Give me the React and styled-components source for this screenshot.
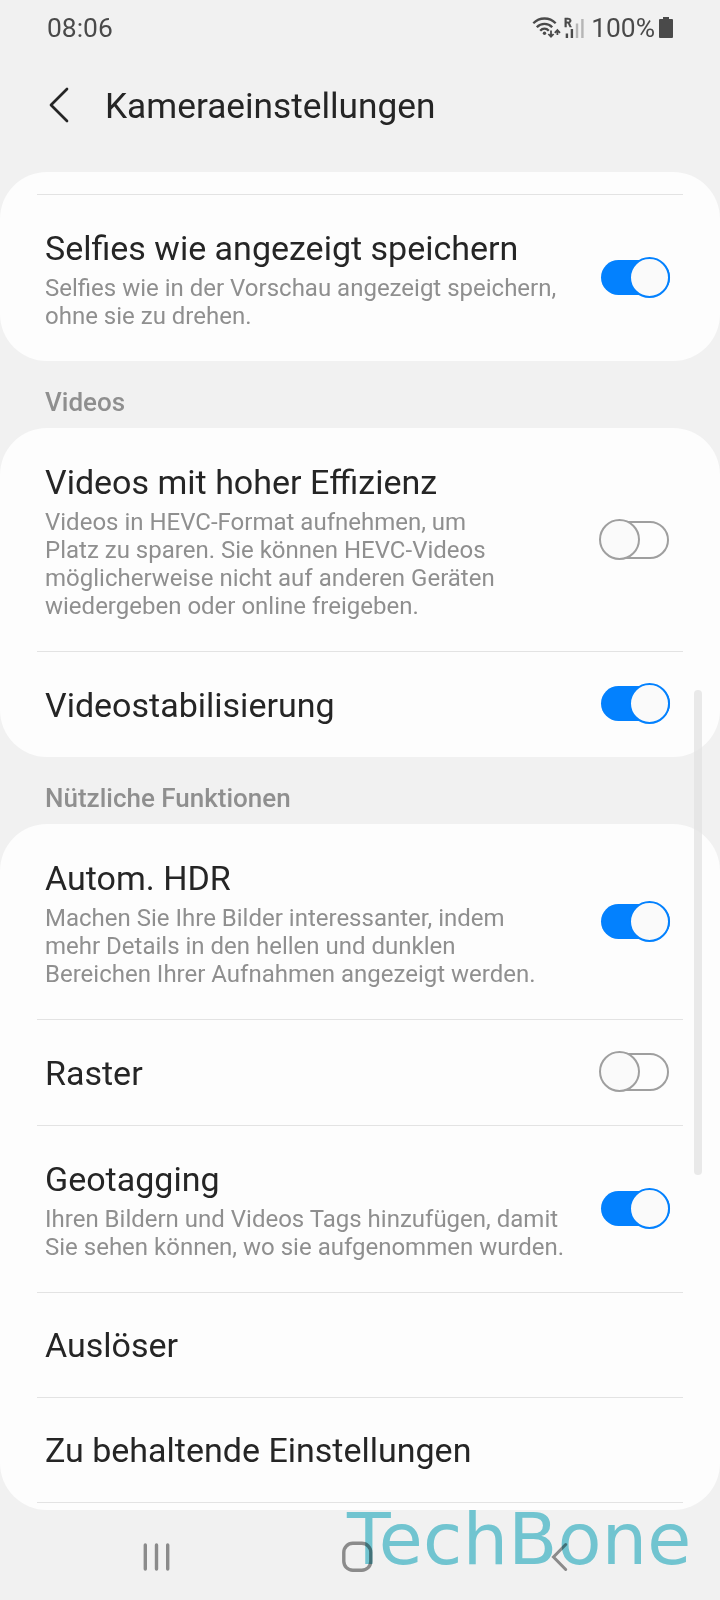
import React from 'react'
import styled, { createGlobalStyle, css } from 'styled-components'

const groups = [
    {
        clipped: true,
        items: [
            {
                title: 'Selfies wie angezeigt speichern',
                lines: ['Selfies wie in der Vorschau angezeigt speichern,', 'ohne sie zu drehen.'],
                toggle: true,
                on: true
            }
        ]
    },
    {
        label: 'Videos',
        items: [
            {
                title: 'Videos mit hoher Effizienz',
                lines: [
                    'Videos in HEVC-Format aufnehmen, um',
                    'Platz zu sparen. Sie können HEVC-Videos',
                    'möglicherweise nicht auf anderen Geräten',
                    'wiedergeben oder online freigeben.'
                ],
                toggle: true,
                on: false
            },
            { title: 'Videostabilisierung', toggle: true, on: true }
        ]
    },
    {
        label: 'Nützliche Funktionen',
        more: true,
        items: [
            {
                title: 'Autom. HDR',
                lines: [
                    'Machen Sie Ihre Bilder interessanter, indem',
                    'mehr Details in den hellen und dunklen',
                    'Bereichen Ihrer Aufnahmen angezeigt werden.'
                ],
                toggle: true,
                on: true
            },
            { title: 'Raster', toggle: true, on: false },
            {
                title: 'Geotagging',
                lines: ['Ihren Bildern und Videos Tags hinzufügen, damit', 'Sie sehen können, wo sie aufgenommen wurden.'],
                toggle: true,
                on: true
            },
            { title: 'Auslöser' },
            { title: 'Zu behaltende Einstellungen' }
        ]
    }
]

const StatusIcons = () => (
    <svg width="60" height="24" viewBox="530 14 60 24" fill="none">
        <g stroke="#4a4a4a" strokeWidth="2.3">
            <path d="M532.3 22.3C538.5 15.9 548.5 15.9 554.7 22.3" />
            <path d="M535.8 26.2C540 21.7 547 21.7 551.2 26.2" />
            <path d="M539.2 29.7C541.7 27 545.3 27 547.8 29.7" />
        </g>
        <circle cx="543.5" cy="32.3" r="1.7" fill="#4a4a4a" />
        <path d="M550 29.5V35.5M547.4 33L550 35.8L552.6 33M556.4 34V29.5M553.8 31.8L556.4 29L559 31.8" stroke="#4a4a4a" strokeWidth="1.8" />
        <path d="M565.9 32.5V37M570.9 28V37" stroke="#4a4a4a" strokeWidth="2.4" />
        <path d="M576 22.5V37M581.4 18V37" stroke="#b5b5b5" strokeWidth="2.4" />
        <text x="563" y="25.7" fontFamily="Roboto, sans-serif" fontSize="12.2" fontWeight="700" fill="#4a4a4a" stroke="#4a4a4a" strokeWidth="0.3">R</text>
    </svg>
)

const App = () => {
    return (
        <Screen>
            <GlobalStyle />
            <StatusBar>
                <Clock>08:06</Clock>
                <StatusIcons />
                <Percent>100%</Percent>
                <svg width="14" height="21" viewBox="0 0 14 21">
                    <path d="M4 0h6v2h3q1 0 1 1v17q0 1-1 1H1q-1 0-1-1V3q0-1 1-1h3z" fill="#4a4a4a" />
                </svg>
            </StatusBar>

            <Header>
                <svg width="20" height="36" viewBox="0 0 20 36" fill="none">
                    <path d="M18 2L2 18L18 34" stroke="#252525" strokeWidth="2.7" strokeLinecap="round" strokeLinejoin="round" />
                </svg>
                <h1>Kameraeinstellungen</h1>
            </Header>

            {groups.map((group, i) => (
                <section key={i}>
                    {group.label && <Label>{group.label}</Label>}
                    <Card $clipped={group.clipped} $more={group.more}>
                        {group.items.map((item, n) => (
                            <Row key={item.title} $first={n === 0 && !group.clipped} $single={!item.lines} $plain={!item.toggle}>
                                <div>
                                    <Title>{item.title}</Title>
                                    {item.lines && (
                                        <Description>
                                            {item.lines.map((line) => <span key={line}>{line}</span>)}
                                        </Description>
                                    )}
                                </div>
                                {item.toggle && (
                                    <Switch role="switch" aria-checked={item.on} $on={item.on}>
                                        <Knob $on={item.on} />
                                    </Switch>
                                )}
                            </Row>
                        ))}
                    </Card>
                </section>
            ))}

            <NavBar>
                <svg width="28" height="30" viewBox="0 0 28 30">
                    <path d="M2.3 3V27M13.5 3V27M24.7 3V27" stroke="#8b8b8b" strokeWidth="3.4" strokeLinecap="round" />
                </svg>
                <svg width="32" height="32" viewBox="0 0 32 32">
                    <rect x="1.8" y="2.3" width="27" height="27" rx="9" fill="none" stroke="#8b8b8b" strokeWidth="3.4" />
                </svg>
                <svg width="18" height="30" viewBox="0 0 18 30">
                    <path d="M14.7 2.5L2.5 15L14.7 27.5" fill="none" stroke="#8b8b8b" strokeWidth="3" strokeLinecap="round" />
                </svg>
            </NavBar>

            <ScrollThumb />
            <Watermark>TechBone</Watermark>
        </Screen>
    )
}

export default App


const GlobalStyle = createGlobalStyle`
    * { box-sizing: border-box; }
    body {
        margin: 0;
        background: #f1f1f1;
    }
    svg { display: block; flex: none; }
`

const Screen = styled.div`
    position: relative;
    display: flex;
    flex-direction: column;
    width: 720px;
    height: 1600px;
    overflow: hidden;
    background: #f1f1f1;
    color: #252525;
    font-family: Roboto, sans-serif;

    > * { flex-shrink: 0; }
`

const StatusBar = styled.div`
    display: flex;
    align-items: center;
    height: 54px;
    padding: 0 47px 0 47px;
    color: #4a4a4a;
    font-size: 26.4px;
    line-height: 30px;
`

const Clock = styled.span`
    margin-right: auto;
    padding-top: 2px;
`

const Percent = styled.span`
    padding-top: 2px;
    margin-right: 4px;
`

const Header = styled.header`
    display: flex;
    align-items: center;
    height: 118px;
    padding: 0 0 17px 49px;

    h1 {
        margin: 0 0 0 36px;
        padding-top: 3px;
        font-size: 35.25px;
        font-weight: 400;
        line-height: 42px;
    }
`

const Label = styled.h2`
    height: 67px;
    margin: 0;
    padding: 26px 45px 0;
    color: #8f8f8f;
    font-size: 26px;
    font-weight: 500;
    line-height: 30px;
`

const Card = styled.div`
    padding: 0 37px;
    border-radius: 47px;
    background: #fdfdfd;

    > * + * {
        border-top: 1px solid #e3e3e3;
    }

    ${({ $clipped }) => $clipped && css`
        padding-top: 22px;
        > :first-child {
            border-top: 1px solid #e3e3e3;
        }
    `}

    ${({ $more }) => $more && css`
        padding-bottom: 7px;
        > :last-child {
            border-bottom: 1px solid #e3e3e3;
        }
    `}
`

const Row = styled.div`
    display: flex;
    align-items: center;
    justify-content: space-between;
    padding: 33px 13px ${({ $single }) => ($single ? 32 : 31)}px 8px;
    ${({ $first }) => $first && 'padding-top: 34px;'}
    ${({ $plain }) => $plain && 'padding-top: 32px;'}
`

const Title = styled.div`
    font-size: 34px;
    line-height: 40px;
`

const Description = styled.div`
    padding-top: 6px;
    color: #8f8f8f;
    font-size: 24px;
    line-height: 28px;
    white-space: nowrap;

    span { display: block; }
`

const Switch = styled.div`
    display: flex;
    align-items: center;
    justify-content: ${({ $on }) => ($on ? 'flex-end' : 'flex-start')};
    flex: none;
    width: 69px;
    height: ${({ $on }) => ($on ? 35 : 38)}px;
    margin: -2px ${({ $on }) => ($on ? 0 : 1)}px 1px 0;
    border-radius: 19px;
    background: ${({ $on }) => ($on ? '#0381fe' : 'transparent')};
    border: ${({ $on }) => ($on ? 'none' : '2px solid #9f9f9f')};
`

const Knob = styled.div`
    flex: none;
    width: 41px;
    height: 41px;
    margin-left: ${({ $on }) => ($on ? 0 : -3)}px;
    border: 2px solid ${({ $on }) => ($on ? '#0381fe' : '#9f9f9f')};
    border-radius: 50%;
    background: #fafafa;
`

const NavBar = styled.nav`
    display: grid;
    grid-template-columns: 199px 209px auto;
    align-items: center;
    height: 90px;
    padding: 3px 0 0 143px;
`

const ScrollThumb = styled.div`
    position: absolute;
    top: 690px;
    right: 18.5px;
    width: 7.5px;
    height: 485px;
    border-radius: 4px;
    background: rgba(228, 228, 228, 0.8);
`

const Watermark = styled.div`
    position: absolute;
    top: 1498px;
    left: 347px;
    color: #77d0dc;
    font-family: 'DejaVu Sans', sans-serif;
    font-size: 71.5px;
    letter-spacing: 0.3px;
    line-height: 84px;
    mix-blend-mode: multiply;
`
